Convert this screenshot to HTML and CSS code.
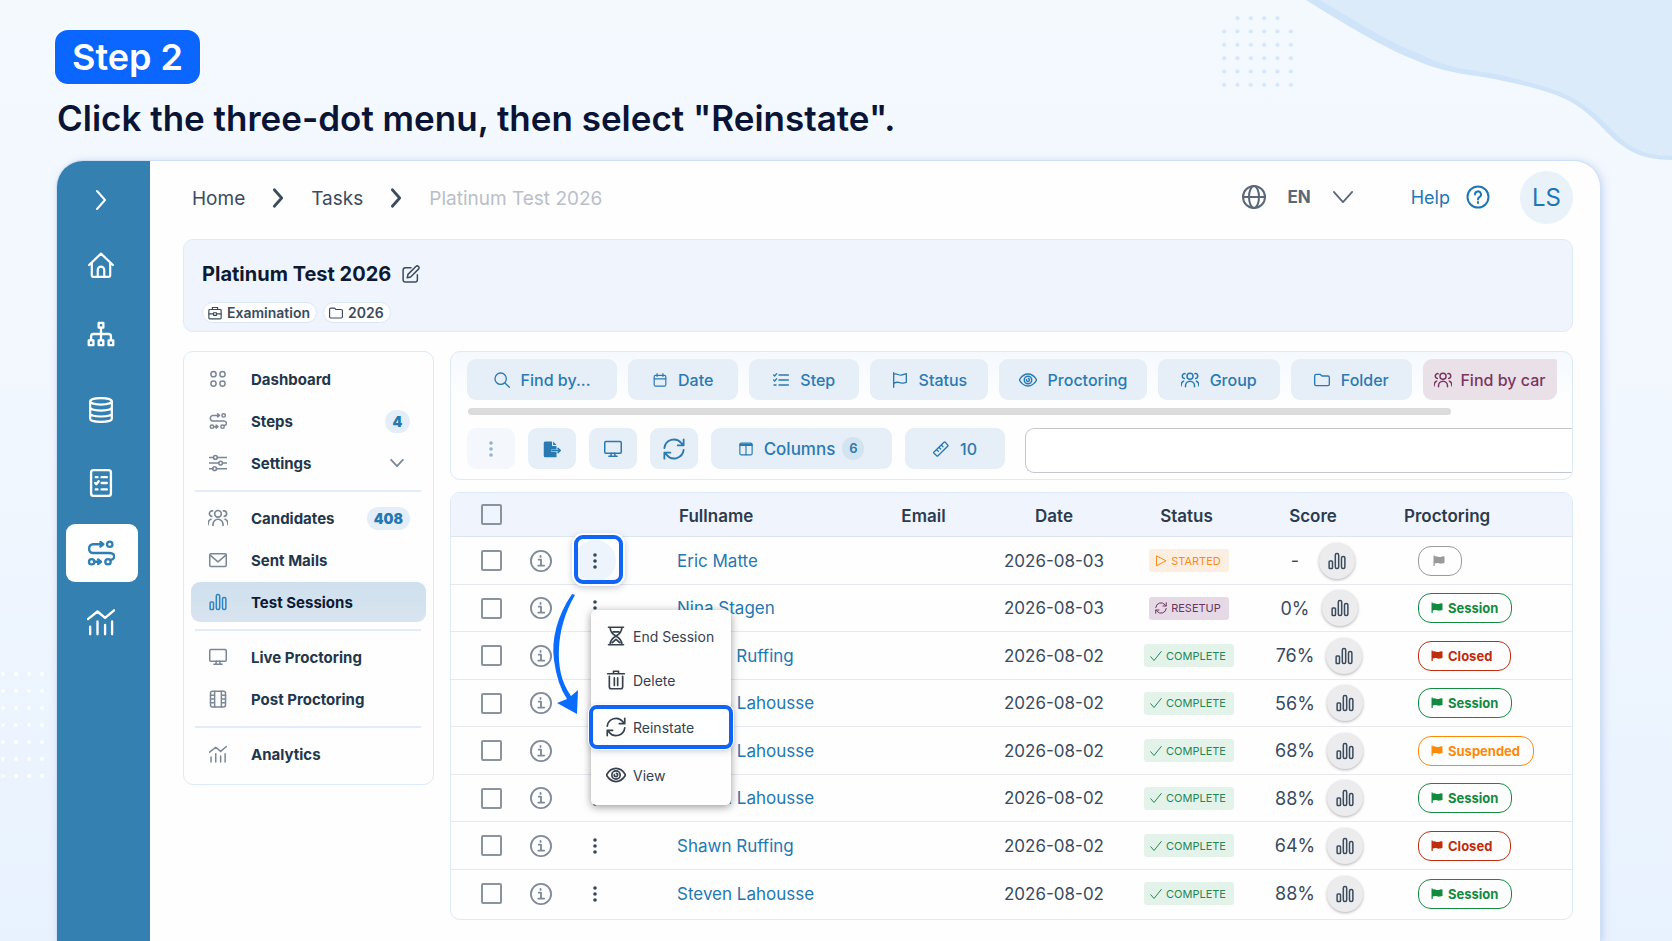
FILE: index.html
```html
<!DOCTYPE html>
<html lang="en">
<head>
<meta charset="utf-8">
<title>Platinum Test 2026 – Test Sessions</title>
<link rel="stylesheet" href="styles.css">
</head>
<body>
<svg class="defs" aria-hidden="true">
  <symbol id="i-right" viewBox="0 0 24 24"><path d="M8 3l8 9-8 9"/></symbol>
  <symbol id="i-down" viewBox="0 0 24 24"><path d="M2 6.500l10 11 10-11"/></symbol>
  <symbol id="i-home" viewBox="0 0 24 24"><path d="M1 12L12 1.500 23 12M3.500 10v11.500q0 1.500 1.500 1.500h14q1.500 0 1.500-1.500V10M9 23v-6.500a3 3 0 0 1 6 0V23"/></symbol>
  <symbol id="i-org" viewBox="0 0 24 24"><path d="M10 2.500h4v4h-4zM1.500 17.500h4v4h-4zM10 17.500h4v4h-4zM18.500 17.500h4v4h-4zM12 6.500v11M3.500 17.500V14q0-2 2-2h13q2 0 2 2v3.500"/></symbol>
  <symbol id="i-db" viewBox="0 0 24 24"><ellipse cx="12" cy="4" rx="10" ry="3"/><path d="M2 4v16c0 4 20 4 20 0V4M2 9.500c0 4 20 4 20 0M2 15c0 4 20 4 20 0"/></symbol>
  <symbol id="i-list" viewBox="0 0 24 24"><rect x="3.500" y="1" width="17" height="22" rx="2"/><path d="M12.500 7h4.500M12.500 12h4.500M12.500 17.500h4.500M7.500 7h1.500M7 12l1 1 2-2.500M7.500 17.500h1.500"/></symbol>
  <symbol id="i-steps" viewBox="0 0 24 24"><circle cx="19.500" cy="4.500" r="2.300"/><path d="M13.500 4.500H5a3.800 3.800 0 0 0 0 7.500h14c5.500 0 5.500 5 1.500 6M11.500 2.500l2.500 2-2.500 2M6.500 19.500h5M9.500 17.500l2.500 2-2.500 2"/><circle cx="4" cy="19.500" r="2.300"/><circle cx="18" cy="19.500" r="2.300"/></symbol>
  <symbol id="i-trend" viewBox="0 0 24 24"><path d="M.8 9.500L9 3l6.500 5.500L23.200 2M2.700 16v6.500M9 11.500v11M15.500 14.500v8M21.500 11.500v11"/></symbol>
  <symbol id="i-grid" viewBox="0 0 24 24"><circle cx="6" cy="5.500" r="3.500"/><circle cx="18" cy="5.500" r="3.500"/><circle cx="6" cy="18" r="3.500"/><circle cx="18" cy="18" r="3.500"/></symbol>
  <symbol id="i-sliders" viewBox="0 0 24 24"><path d="M0 4.500h6M11 4.500h13M0 12h13M18 12h6M0 19.500h5M10 19.500h14"/><circle cx="8.500" cy="4.500" r="2.500"/><circle cx="15.500" cy="12" r="2.500"/><circle cx="7.500" cy="19.500" r="2.500"/></symbol>
  <symbol id="i-people" viewBox="0 0 24 24"><circle cx="12" cy="7" r="4"/><path d="M6 21v-1.500a6 6 0 0 1 12 0V21M5.500 3.500A3.200 3.200 0 0 0 4.500 10M18.500 3.500a3.200 3.200 0 0 1 1 6.500M0 20c0-3 .8-5.500 3.500-6.500M24 20c0-3-.8-5.500-3.500-6.500"/></symbol>
  <symbol id="i-mail" viewBox="0 0 24 24"><rect x="1" y="3.500" width="22" height="17" rx="1.500"/><path d="M1.500 5.500L12 14.500 22.500 5.500"/></symbol>
  <symbol id="i-bars" viewBox="0 0 24 24"><rect x="1.500" y="12" width="4.500" height="10" rx="1"/><rect x="9.750" y="2" width="4.500" height="20" rx="2"/><rect x="18" y="6" width="4.500" height="16" rx="2"/></symbol>
  <symbol id="i-monitor" viewBox="0 0 24 24"><rect x="1" y="2" width="22" height="15.500" rx="1.500"/><path d="M10 17.500l-1 4M14 17.500l1 4M6.500 21.800h11"/></symbol>
  <symbol id="i-film" viewBox="0 0 24 24"><rect x="2" y="1.500" width="20" height="21" rx="2.500"/><path d="M7.500 1.500v21M16.500 1.500v21M2 7h5.500M2 12h5.500M2 17h5.500M16.500 7H22M16.500 12H22M16.500 17H22"/></symbol>
  <symbol id="i-globe" viewBox="0 0 24 24"><circle cx="12" cy="12" r="11"/><ellipse cx="12" cy="12" rx="5" ry="11"/><path d="M1 12h22"/></symbol>
  <symbol id="i-help" viewBox="0 0 24 24"><circle cx="12" cy="12" r="10.500"/><path d="M9 9.500a3 3 0 1 1 4.500 2.500q-1.500.8-1.500 2.500M12 17v1"/></symbol>
  <symbol id="i-edit" viewBox="0 0 24 24"><path d="M12 3.500H4.500a3 3 0 0 0-3 3v13a3 3 0 0 0 3 3h13a3 3 0 0 0 3-3V13M8 12.500L18.500 2a2.200 2.200 0 0 1 3.500 3.500L11.500 16l-4.500 1z"/></symbol>
  <symbol id="i-case" viewBox="0 0 24 24"><rect x="1.500" y="6" width="21" height="16" rx="1.500"/><path d="M7.500 6V2.500h9V6M1.500 13.500h8M14.500 13.500h8M9.500 11.500h5v4.500h-5z"/></symbol>
  <symbol id="i-folder" viewBox="0 0 24 24"><path d="M1 6q0-2.500 2-2.500h6l3 2.500h9q2 0 2 2v10.500q0 2-2 2H3q-2 0-2-2z"/></symbol>
  <symbol id="i-search" viewBox="0 0 24 24"><circle cx="10" cy="10" r="8.500"/><path d="M16.500 16.500L23 23"/></symbol>
  <symbol id="i-cal" viewBox="0 0 24 24"><rect x="2" y="4" width="20" height="18.500" rx="2.500"/><path d="M2 10h20M7 1v5M17 1v5"/></symbol>
  <symbol id="i-check-list" viewBox="0 0 24 24"><path d="M9 4.500h14M9 12h14M9 19.500h14M1 4.500l1.500 1.500L5.500 2.500M1 12l1.500 1.500L5.500 10M1.500 19.500h3"/></symbol>
  <symbol id="i-flag-o" viewBox="0 0 24 24"><path d="M2.500 1v22M2.500 3.500c5-2.500 7 2.500 12 1q3-1 7-2v13c-5 1-6 2-10 .5q-4-1.500-9 1"/></symbol>
  <symbol id="i-eye" viewBox="0 0 24 24"><path class="fine" d="M.5 12C6.500 1.500 17.500 1.500 23.500 12 17.500 22.500 6.500 22.500.5 12z"/><circle class="fine" cx="12" cy="12" r="5"/><path class="fine" d="M10 11.500a2 2 0 1 0 2.500-1.500"/></symbol>
  <symbol id="i-export" viewBox="0 0 24 24"><path class="solid" d="M3 2h9v6h6v4.500h-7v3h7V23H3q-2 0-2-2V4q0-2 2-2zM13.500 2L18 6.500h-4.500z"/><path d="M12 14h10.500M20 11.200l3 2.800-3 2.800"/></symbol>
  <symbol id="i-sync" viewBox="0 0 24 24"><path d="M1.500 11A10.500 10.500 0 0 1 20 5.500L22.500 8M22.500 1.500V8H16M22.500 13A10.500 10.500 0 0 1 4 18.500L1.500 16M1.500 22.500V16H8"/></symbol>
  <symbol id="i-cols" viewBox="0 0 24 24"><rect x="1.500" y="2" width="21" height="20" rx="2.500"/><path d="M1.500 6h21M12 4v18M1.500 4h21"/></symbol>
  <symbol id="i-ruler" viewBox="0 0 24 24"><path d="M1.500 16.500L16.500 2q1-1 2 0L22 6q1 1 0 2L7.500 22q-1 1-2 0l-4-3.500q-1-1 0-2zM5.500 13l2.500 2.500M9 9.500l2.500 2.500M12.500 6l2.500 2.500"/></symbol>
  <symbol id="i-dots" viewBox="0 0 24 24"><circle class="solid" cx="12" cy="3" r="2.700"/><circle class="solid" cx="12" cy="12" r="2.700"/><circle class="solid" cx="12" cy="21" r="2.700"/></symbol>
  <symbol id="i-info" viewBox="0 0 24 24"><circle cx="12" cy="12" r="11"/><path d="M9.500 10.500H12V17M9 17h6.500M11.500 6.500v1"/></symbol>
  <symbol id="i-play" viewBox="0 0 24 24"><path d="M3 2.500v19L21.500 12z"/></symbol>
  <symbol id="i-tick" viewBox="0 0 24 24"><path d="M1.500 13.500L8 21 22.500 3"/></symbol>
  <symbol id="i-flag" viewBox="0 0 24 24"><path class="solid" d="M1 1h2.500v2c6-2 7 2 12 1q4-2 7.500-1v13c-6 1-7 2-11 .500q-4-1.500-8.500.500v5H1z"/></symbol>
  <symbol id="i-hour" viewBox="0 0 24 24"><path d="M3 1.500h18M3 22.500h18M5 2q0 6 7 10Q19 8 19 2M5 22q0-6 7-10 7 4 7 10M8.500 7h7M7.500 20l4.500-4 4.500 4"/></symbol>
  <symbol id="i-trash" viewBox="0 0 24 24"><path d="M2 4.500h20M9 4V1.500h6V4M4 7.500V20q0 2.500 2.500 2.500h11Q20 22.500 20 20V7.500M10 9.500v9M14 9.500v9"/></symbol>
</svg>

<svg class="blob" viewBox="0 0 372 165" aria-hidden="true">
  <path class="blob-edge" d="M6 0C60 34 90 50 115 60 150 75 170 74 194 79 215 83 235 88 250 93 310 112 305 160 372 160V0z"/>
  <path class="blob-fill" d="M20 0C70 30 95 45 120 54 150 70 170 69 195 74 215 78 237 84 252 89 315 110 310 156 372 156V0z"/>
</svg>
<svg class="dots-top" viewBox="0 0 76 76" aria-hidden="true">
  <defs><pattern id="dp" width="13" height="13" patternUnits="userSpaceOnUse"><circle cx="5" cy="5" r="2"/></pattern></defs>
  <path fill="url(#dp)" d="M13 0H65V13H76V76H0V13H13z"/>
</svg>
<svg class="dots-left" viewBox="0 0 44 119" aria-hidden="true">
  <defs><pattern id="dq" width="13" height="17" patternUnits="userSpaceOnUse"><circle cx="3" cy="9" r="2"/></pattern></defs>
  <path fill="url(#dq)" d="M0 0H44V119H0z"/>
</svg>

<div class="page">
  <header class="intro">
    <span class="step">Step 2</span>
    <h1>Click the three-dot menu, then select "Reinstate".</h1>
  </header>

  <div class="app">
    <nav class="rail" aria-label="Main">
      <a href="#" aria-label="Expand"><svg class="ic s24"><use href="#i-right"/></svg></a>
      <a href="#" aria-label="Home"><svg class="ic s26"><use href="#i-home"/></svg></a>
      <a href="#" aria-label="Organisation"><svg class="ic s28"><use href="#i-org"/></svg></a>
      <a href="#" aria-label="Data"><svg class="ic s26"><use href="#i-db"/></svg></a>
      <a href="#" aria-label="Lists"><svg class="ic s28"><use href="#i-list"/></svg></a>
      <a href="#" aria-label="Tasks" class="on"><svg class="ic s28"><use href="#i-steps"/></svg></a>
      <a href="#" aria-label="Analytics"><svg class="ic s28"><use href="#i-trend"/></svg></a>
    </nav>

    <main class="main">
      <div class="topbar">
        <nav class="crumbs" aria-label="Breadcrumb">
          <a href="#">Home</a><svg class="ic s22"><use href="#i-right"/></svg>
          <a href="#">Tasks</a><svg class="ic s22"><use href="#i-right"/></svg>
          <span>Platinum Test 2026</span>
        </nav>
        <div class="tools">
          <button class="lang" type="button"><svg class="ic s24"><use href="#i-globe"/></svg>EN<svg class="ic s22"><use href="#i-down"/></svg></button>
          <a class="help" href="#">Help<svg class="ic s24"><use href="#i-help"/></svg></a>
          <button class="avatar" type="button">LS</button>
        </div>
      </div>

      <section class="banner">
        <h2>Platinum Test 2026 <button type="button" aria-label="Rename"><svg class="ic s18"><use href="#i-edit"/></svg></button></h2>
        <div class="tags">
          <span><svg class="ic s14"><use href="#i-case"/></svg>Examination</span>
          <span><svg class="ic s14"><use href="#i-folder"/></svg>2026</span>
        </div>
      </section>

      <div class="cols">
        <nav class="menu" aria-label="Task">
          <a href="#"><svg class="ic s18"><use href="#i-grid"/></svg>Dashboard</a>
          <a href="#"><svg class="ic s18"><use href="#i-steps"/></svg>Steps<b>4</b></a>
          <a href="#"><svg class="ic s18"><use href="#i-sliders"/></svg>Settings<svg class="ic s14 caret"><use href="#i-down"/></svg></a>
          <hr>
          <a href="#"><svg class="ic s20"><use href="#i-people"/></svg>Candidates<b>408</b></a>
          <a href="#"><svg class="ic s18"><use href="#i-mail"/></svg>Sent Mails</a>
          <a href="#" class="on"><svg class="ic s18"><use href="#i-bars"/></svg>Test Sessions</a>
          <hr>
          <a href="#"><svg class="ic s18"><use href="#i-monitor"/></svg>Live Proctoring</a>
          <a href="#"><svg class="ic s18"><use href="#i-film"/></svg>Post Proctoring</a>
          <hr>
          <a href="#"><svg class="ic s18"><use href="#i-trend"/></svg>Analytics</a>
        </nav>

        <div class="content">
          <section class="bar">
            <div class="filters">
              <button type="button"><svg class="ic s16"><use href="#i-search"/></svg>Find by...</button>
              <button type="button"><svg class="ic s14"><use href="#i-cal"/></svg>Date</button>
              <button type="button"><svg class="ic s16"><use href="#i-check-list"/></svg>Step</button>
              <button type="button"><svg class="ic s16"><use href="#i-flag-o"/></svg>Status</button>
              <button type="button"><svg class="ic s18"><use href="#i-eye"/></svg>Proctoring</button>
              <button type="button"><svg class="ic s18"><use href="#i-people"/></svg>Group</button>
              <button type="button"><svg class="ic s16"><use href="#i-folder"/></svg>Folder</button>
              <button type="button" class="plum"><svg class="ic s18"><use href="#i-people"/></svg>Find by car</button>
            </div>
            <div class="track"></div>
            <div class="actions">
              <button type="button" class="off" aria-label="More"><svg class="ic s16"><use href="#i-dots"/></svg></button>
              <button type="button" aria-label="Export"><svg class="ic s18"><use href="#i-export"/></svg></button>
              <button type="button" aria-label="Display"><svg class="ic s18"><use href="#i-monitor"/></svg></button>
              <button type="button" aria-label="Refresh"><svg class="ic s22"><use href="#i-sync"/></svg></button>
              <button type="button" class="wide"><svg class="ic s14"><use href="#i-cols"/></svg>Columns<b>6</b></button>
              <button type="button"><svg class="ic s16"><use href="#i-ruler"/></svg>10</button>
              <input type="text" aria-label="Search">
            </div>
          </section>

          <section class="sheet">
            <table>
              <colgroup><col class="c-check"><col class="c-info"><col class="c-act"><col><col class="c-mail"><col class="c-date"><col class="c-status"><col class="c-score"><col class="c-proc"></colgroup>
              <thead><tr><th class="pick"><input type="checkbox" aria-label="Select all"></th><th></th><th></th><th class="name">Fullname</th><th>Email</th><th>Date</th><th class="h-status">Status</th><th class="h-score">Score</th><th class="proc">Proctoring</th></tr></thead>
              <tbody>
                <tr>
                  <td class="pick"><input type="checkbox" aria-label="Select Eric Matte"></td>
                  <td class="left"><svg class="ic s22 info"><use href="#i-info"/></svg></td>
                  <td class="left act">
                    <button class="dots" type="button" aria-label="Open menu"><svg class="ic s16"><use href="#i-dots"/></svg></button>
                    <span class="ring"></span>
                    <svg class="arrow" viewBox="0 0 36 130" aria-hidden="true"><path d="M23 4C8 26 2 50 5 70q3 24 13 39l-10 4 20 11 1-24-7 6C12 92 9 75 10 58 11 40 16 22 26 5z"/></svg>
                    <div class="popup">
                      <button type="button"><svg class="ic s20"><use href="#i-hour"/></svg>End Session</button>
                      <button type="button"><svg class="ic s20"><use href="#i-trash"/></svg>Delete</button>
                      <button type="button" class="picked"><svg class="ic s20"><use href="#i-sync"/></svg>Reinstate</button>
                      <button type="button"><svg class="ic s20"><use href="#i-eye"/></svg>View</button>
                    </div>
                  </td>
                  <td class="left"><a href="#">Eric Matte</a></td><td></td><td>2026-08-03</td>
                  <td><span class="tag amber"><svg class="ic s12"><use href="#i-play"/></svg>STARTED</span></td>
                  <td><span class="score"><span>-</span><button type="button" aria-label="Score details"><svg class="ic s18"><use href="#i-bars"/></svg></button></span></td>
                  <td class="flagcell"><button type="button" class="pill grey" aria-label="Flag"><svg class="ic s12"><use href="#i-flag"/></svg></button></td>
                </tr>
                <tr>
                  <td class="pick"><input type="checkbox" aria-label="Select Nina Stagen"></td>
                  <td class="left"><svg class="ic s22 info"><use href="#i-info"/></svg></td>
                  <td class="left"><button class="dots" type="button" aria-label="Open menu"><svg class="ic s16"><use href="#i-dots"/></svg></button></td>
                  <td class="left"><a href="#">Nina Stagen</a></td><td></td><td>2026-08-03</td>
                  <td><span class="tag mauve"><svg class="ic s12"><use href="#i-sync"/></svg>RESETUP</span></td>
                  <td><span class="score"><span>0%</span><button type="button" aria-label="Score details"><svg class="ic s18"><use href="#i-bars"/></svg></button></span></td>
                  <td class="flagcell"><button type="button" class="pill green"><svg class="ic s12"><use href="#i-flag"/></svg>Session</button></td>
                </tr>
                <tr>
                  <td class="pick"><input type="checkbox" aria-label="Select Shawn Ruffing"></td>
                  <td class="left"><svg class="ic s22 info"><use href="#i-info"/></svg></td>
                  <td class="left"><button class="dots" type="button" aria-label="Open menu"><svg class="ic s16"><use href="#i-dots"/></svg></button></td>
                  <td class="left"><a href="#">Shawn Ruffing</a></td><td></td><td>2026-08-02</td>
                  <td><span class="tag mint"><svg class="ic s12"><use href="#i-tick"/></svg>COMPLETE</span></td>
                  <td><span class="score"><span>76%</span><button type="button" aria-label="Score details"><svg class="ic s18"><use href="#i-bars"/></svg></button></span></td>
                  <td class="flagcell"><button type="button" class="pill red"><svg class="ic s12"><use href="#i-flag"/></svg>Closed</button></td>
                </tr>
                <tr>
                  <td class="pick"><input type="checkbox" aria-label="Select Steven Lahousse"></td>
                  <td class="left"><svg class="ic s22 info"><use href="#i-info"/></svg></td>
                  <td class="left"><button class="dots" type="button" aria-label="Open menu"><svg class="ic s16"><use href="#i-dots"/></svg></button></td>
                  <td class="left"><a href="#">Steven Lahousse</a></td><td></td><td>2026-08-02</td>
                  <td><span class="tag mint"><svg class="ic s12"><use href="#i-tick"/></svg>COMPLETE</span></td>
                  <td><span class="score"><span>56%</span><button type="button" aria-label="Score details"><svg class="ic s18"><use href="#i-bars"/></svg></button></span></td>
                  <td class="flagcell"><button type="button" class="pill green"><svg class="ic s12"><use href="#i-flag"/></svg>Session</button></td>
                </tr>
                <tr>
                  <td class="pick"><input type="checkbox" aria-label="Select Steven Lahousse"></td>
                  <td class="left"><svg class="ic s22 info"><use href="#i-info"/></svg></td>
                  <td class="left"><button class="dots" type="button" aria-label="Open menu"><svg class="ic s16"><use href="#i-dots"/></svg></button></td>
                  <td class="left"><a href="#">Steven Lahousse</a></td><td></td><td>2026-08-02</td>
                  <td><span class="tag mint"><svg class="ic s12"><use href="#i-tick"/></svg>COMPLETE</span></td>
                  <td><span class="score"><span>68%</span><button type="button" aria-label="Score details"><svg class="ic s18"><use href="#i-bars"/></svg></button></span></td>
                  <td class="flagcell"><button type="button" class="pill orange"><svg class="ic s12"><use href="#i-flag"/></svg>Suspended</button></td>
                </tr>
                <tr>
                  <td class="pick"><input type="checkbox" aria-label="Select Steven Lahousse"></td>
                  <td class="left"><svg class="ic s22 info"><use href="#i-info"/></svg></td>
                  <td class="left"><button class="dots" type="button" aria-label="Open menu"><svg class="ic s16"><use href="#i-dots"/></svg></button></td>
                  <td class="left"><a href="#">Steven Lahousse</a></td><td></td><td>2026-08-02</td>
                  <td><span class="tag mint"><svg class="ic s12"><use href="#i-tick"/></svg>COMPLETE</span></td>
                  <td><span class="score"><span>88%</span><button type="button" aria-label="Score details"><svg class="ic s18"><use href="#i-bars"/></svg></button></span></td>
                  <td class="flagcell"><button type="button" class="pill green"><svg class="ic s12"><use href="#i-flag"/></svg>Session</button></td>
                </tr>
                <tr>
                  <td class="pick"><input type="checkbox" aria-label="Select Shawn Ruffing"></td>
                  <td class="left"><svg class="ic s22 info"><use href="#i-info"/></svg></td>
                  <td class="left"><button class="dots" type="button" aria-label="Open menu"><svg class="ic s16"><use href="#i-dots"/></svg></button></td>
                  <td class="left"><a href="#">Shawn Ruffing</a></td><td></td><td>2026-08-02</td>
                  <td><span class="tag mint"><svg class="ic s12"><use href="#i-tick"/></svg>COMPLETE</span></td>
                  <td><span class="score"><span>64%</span><button type="button" aria-label="Score details"><svg class="ic s18"><use href="#i-bars"/></svg></button></span></td>
                  <td class="flagcell"><button type="button" class="pill red"><svg class="ic s12"><use href="#i-flag"/></svg>Closed</button></td>
                </tr>
                <tr>
                  <td class="pick"><input type="checkbox" aria-label="Select Steven Lahousse"></td>
                  <td class="left"><svg class="ic s22 info"><use href="#i-info"/></svg></td>
                  <td class="left"><button class="dots" type="button" aria-label="Open menu"><svg class="ic s16"><use href="#i-dots"/></svg></button></td>
                  <td class="left"><a href="#">Steven Lahousse</a></td><td></td><td>2026-08-02</td>
                  <td><span class="tag mint"><svg class="ic s12"><use href="#i-tick"/></svg>COMPLETE</span></td>
                  <td><span class="score"><span>88%</span><button type="button" aria-label="Score details"><svg class="ic s18"><use href="#i-bars"/></svg></button></span></td>
                  <td class="flagcell"><button type="button" class="pill green"><svg class="ic s12"><use href="#i-flag"/></svg>Session</button></td>
                </tr>
              </tbody>
            </table>
          </section>
        </div>
      </div>
    </main>
  </div>
</div>
</body>
</html>
```
FILE: styles.css
```css
* { box-sizing: border-box; }
html { height: 100%; }
body {
  position: relative;
  margin: 0;
  min-height: 100%;
  overflow-x: hidden;
  font-family: Inter, "Open Sans", sans-serif;
  color: #3b4b5e;
  background: linear-gradient(180deg, #f4f9fe 0%, #f3f8fe 35%, #e8f2fe 100%);
}
button { font: inherit; color: inherit; border: 0; background: none; padding: 0; cursor: pointer; }
a { color: inherit; text-decoration: none; }
.defs { position: absolute; width: 0; height: 0; }

.ic { fill: none; stroke: currentColor; stroke-width: 2; stroke-linecap: round; stroke-linejoin: round; flex: none; display: block; overflow: visible; }
.solid { fill: currentColor; stroke: none; }
.fine { fill: none; stroke-width: 2; }
.s12 { width: 12px; height: 12px; }
.s14 { width: 14px; height: 14px; }
.s16 { width: 16px; height: 16px; }
.s18 { width: 18px; height: 18px; }
.s20 { width: 20px; height: 20px; }
.s22 { width: 22px; height: 22px; }
.s24 { width: 24px; height: 24px; }
.s26 { width: 26px; height: 26px; }
.s28 { width: 28px; height: 28px; }

.blob { position: absolute; top: 0; right: 0; width: 372px; height: 165px; }
.blob-edge { fill: #d0e4f9; }
.blob-fill { fill: #dbebfa; }
.dots-top { position: absolute; top: 13px; right: 375px; width: 78px; height: 78px; fill: #d3e6fb; }
.dots-left { position: absolute; top: 665px; left: 0; width: 44px; height: 119px; fill: #fff; }

.page { position: relative; min-height: 100vh; display: flex; flex-direction: column; padding: 30px 72px 0 57px; }
.intro { padding-bottom: 19px; }
.step {
  display: inline-block;
  margin-left: -2px;
  padding: 0 17px;
  border-radius: 13px;
  background: #0a66ff;
  box-shadow: 0 0 0 1px #fff;
  color: #fff;
  font-size: 36px;
  line-height: 54px;
  font-weight: 600;
}
h1 { margin: 11px 0 0; color: #0a1535; font-size: 35px; line-height: 47px; font-weight: 600; }

.app {
  flex: 1;
  display: flex;
  overflow: hidden;
  border-radius: 26px 26px 0 0;
  background: #fefefe;
  box-shadow: 0 0 0 1px #cfe0f6, 2px 1px 8px #8fa9dc80;
}
.rail {
  flex: 0 0 93px;
  display: grid;
  grid-template-rows: 60px 70px 68px 84px 61px 80px 58px;
  align-content: start;
  justify-items: center;
  align-items: center;
  padding: 9px 4px 0 0;
  background: #3480b0;
  color: #fff;
}
.rail a { display: grid; place-items: center; width: 72px; height: 58px; padding-right: 2px; border-radius: 9px; }
.rail .on { background: #fff; color: #2f7fb3; }

.main { flex: 1; min-width: 0; padding: 9px 27px 20px 33px; }
.topbar { display: flex; justify-content: space-between; align-items: center; height: 54px; }
.crumbs { display: flex; align-items: center; gap: 22px; padding: 2px 0 0 9px; font-size: 19px; }
.crumbs .ic { stroke-width: 3; }
.crumbs span { color: #b9bfc9; }
.tools { display: flex; align-items: center; }
.lang { display: flex; align-items: center; gap: 21px; color: #5b6878; font-size: 17px; font-weight: 700; }
.help { display: flex; align-items: center; gap: 16px; margin: 0 30px 0 57px; color: #1f76b4; font-size: 18px; }
.avatar { width: 53px; height: 53px; border-radius: 50%; background: #eaf2f9; color: #1f76b4; font-size: 24px; }

.banner { margin-top: 15px; padding: 19px 18px 8px; border: 1px solid #dceafa; border-radius: 10px; background: #f0f5fd; }
.banner h2 { display: flex; align-items: center; gap: 11px; margin: 0; color: #0e1a33; font-size: 20px; line-height: 30px; font-weight: 700; }
.banner h2 button { color: #3b4b5e; }
.tags { display: flex; gap: 6px; margin-top: 13px; }
.tags span { display: flex; align-items: center; gap: 5px; padding: 0 6px 0 5px; border: 1px solid #dce7f5; border-radius: 11px; background: #fff; font-size: 14px; line-height: 19px; font-weight: 600; }

.cols { display: grid; grid-template-columns: 251px minmax(0, 1fr); gap: 16px; align-items: start; margin-top: 19px; }
.menu { padding: 7px 7px 8px; border: 1px solid #dceafa; border-radius: 10px; color: #23364a; font-size: 15px; font-weight: 700; }
.menu a { display: grid; grid-template-columns: 20px 1fr auto; justify-items: start; align-items: center; column-gap: 23px; height: 40px; margin-bottom: 2px; padding: 0 16px 0 17px; border-radius: 9px; }
.menu a > .ic:first-child { justify-self: center; color: #7a8796; }
.menu .on { background: linear-gradient(180deg, #cfe0ee, #d8e4ef); color: #0e1a33; }
.menu .on > .ic:first-child { color: #2f84c2; }
.menu b { min-width: 25px; padding: 0 7px; border-radius: 12px; background: #e4eef8; color: #2478b0; font-size: 14px; line-height: 23px; text-align: center; }
.menu .caret { margin-right: 6px; stroke-width: 3; color: #7a8796; }
.menu hr { height: 2px; margin: 7px 5px 6px 4px; border: 0; background: #e2edf9; }

.content { display: grid; gap: 12px; min-width: 0; }
.bar { border: 1px solid #dceafa; border-radius: 10px; overflow: hidden; padding: 7px 0 6px 16px; background: linear-gradient(180deg, #f5f9fe, #fefefe 40%); color: #2a7ab2; font-weight: 500; font-size: 16px; }
.bar button { display: flex; align-items: center; justify-content: center; gap: 11px; height: 41px; border-radius: 9px; background: #e6eef8; white-space: nowrap; }
.filters { display: grid; grid-template-columns: 150fr 110fr 110fr 118fr 147fr 122fr 121fr 134fr; gap: 11px; margin-right: 15px; }
.filters .plum { gap: 8px; border-top-right-radius: 2px; background: #e9e0e8; color: #7a3560; }
.track { width: 89%; height: 7px; margin: 8px 0 13px 1px; border-radius: 4px; background: #dbdbdb; }
.actions { display: grid; grid-template-columns: 48px 48px 48px 48px 181px 100px minmax(0, 1fr); gap: 13px; }
.actions .off { background: #f4f7fb; color: #8fb4d4; }
.actions .wide { font-size: 17px; }
.actions b { margin-left: -4px; width: 22px; border-radius: 11px; background: #d3e3ef; font-size: 13px; line-height: 23px; font-weight: 600; }
.actions input { min-width: 0; height: 45px; margin-left: 7px; padding: 0 14px; border: 1px solid #c3c6d0; border-right: 0; border-radius: 9px 0 0 9px; background: #fff; font: inherit; }

.sheet { padding-bottom: 2px; border: 1px solid #dceafa; border-radius: 10px; }
table { width: 100%; table-layout: fixed; border-collapse: separate; border-spacing: 0; font-size: 17px; }
.c-check { width: 80px; }
.c-info { width: 43px; }
.c-act { width: 103px; }
.c-mail { width: 129px; }
.c-date { width: 132px; }
.c-status { width: 138px; }
.c-score { width: 122px; }
.c-proc { width: 192px; }
th, td { padding: 0; text-align: center; vertical-align: middle; }
th { height: 44px; padding-top: 2px; border-bottom: 1px solid #dde5ef; background: #f0f5fd; color: #2c3b4e; font-size: 17px; font-weight: 600; }
th:first-child { padding-top: 0; border-top-left-radius: 9px; }
th:last-child { border-top-right-radius: 9px; }
th.name { padding-left: 2px; text-align: left; }
th.proc { padding-left: 24px; text-align: left; }
.h-status { padding-right: 5px; }
.h-score { padding-right: 12px; }
td { height: 48px; border-bottom: 1px solid #e5e9ee; }
tr:nth-child(even) td { height: 47px; }
tbody tr:last-child td { border-bottom: 0; }
.pick { padding-left: 30px; text-align: left; }
.pick input { appearance: none; display: block; width: 21px; height: 21px; margin: 0; border: 2px solid #8a949f; border-radius: 2px; }
.left { text-align: left; }
.left a { color: #2478b0; }
.info { margin-left: -1px; color: #7f8b99; }
.flagcell { padding-left: 38px; text-align: left; }
.dots { display: grid; place-items: center; width: 42px; height: 42px; border-radius: 50%; color: #33475b; }
.act { position: relative; }
.act .dots { background: #edf4fb; }

.ring { position: absolute; left: 0; top: -2px; width: 49px; height: 49px; border: 4px solid #1064f8; border-radius: 9px; box-shadow: 0 0 0 2px #fff, 0 2px 6px 2px #2b3d5a40; }
.arrow { position: absolute; z-index: 3; left: -25px; top: 53px; width: 36px; height: 130px; overflow: visible; fill: #0a6bff; stroke: #fff; stroke-width: 2; paint-order: stroke; }
.popup { position: absolute; z-index: 2; left: 17px; top: 73px; width: 140px; padding: 4px 0 8px; border-radius: 5px; background: #fefefe; box-shadow: 0 2px 8px #00000066; color: #36414f; font-size: 14px; }
.popup button { display: grid; grid-template-columns: 22px 1fr; justify-items: start; align-items: center; column-gap: 6px; width: 100%; height: 44px; padding: 0 14px; }
.popup .ic { justify-self: center; }
.popup .picked { width: 144px; margin: 3px -2px 4px; padding: 0 12px; border: 4px solid #1064f8; border-radius: 8px; background: #fff; box-shadow: 0 0 0 1px #fff, 0 2px 6px #2b3d5a40; }

.tag { display: inline-flex; align-items: center; gap: 4px; height: 23px; padding: 0 8px 0 6px; border-radius: 3px; font-size: 11px; vertical-align: middle; }
.amber { background: #fdeee2; color: #f98a1c; }
.mauve { background: #e6d9e6; color: #6b3560; }
.mint { background: #e3f3e9; color: #23875a; }
.score { display: inline-flex; align-items: center; gap: 12px; font-size: 18px; vertical-align: middle; }
.score span { min-width: 24px; text-align: center; }
.score button { display: grid; place-items: center; width: 36px; height: 36px; border-radius: 50%; background: #ececee; box-shadow: 0 1px 3px #0000004d; }
.pill { display: inline-flex; align-items: center; gap: 5px; min-width: 93px; height: 30px; padding: 0 13px 0 12px; border: 1px solid currentColor; border-radius: 13px; font-size: 13px; font-weight: 700; vertical-align: middle; }
.grey { min-width: 0; padding: 0 16px 0 14px; color: #9a9a9a; }
.green { color: #128a40; }
.red { color: #bf2c0e; }
.orange { color: #fb8a0a; }
```
